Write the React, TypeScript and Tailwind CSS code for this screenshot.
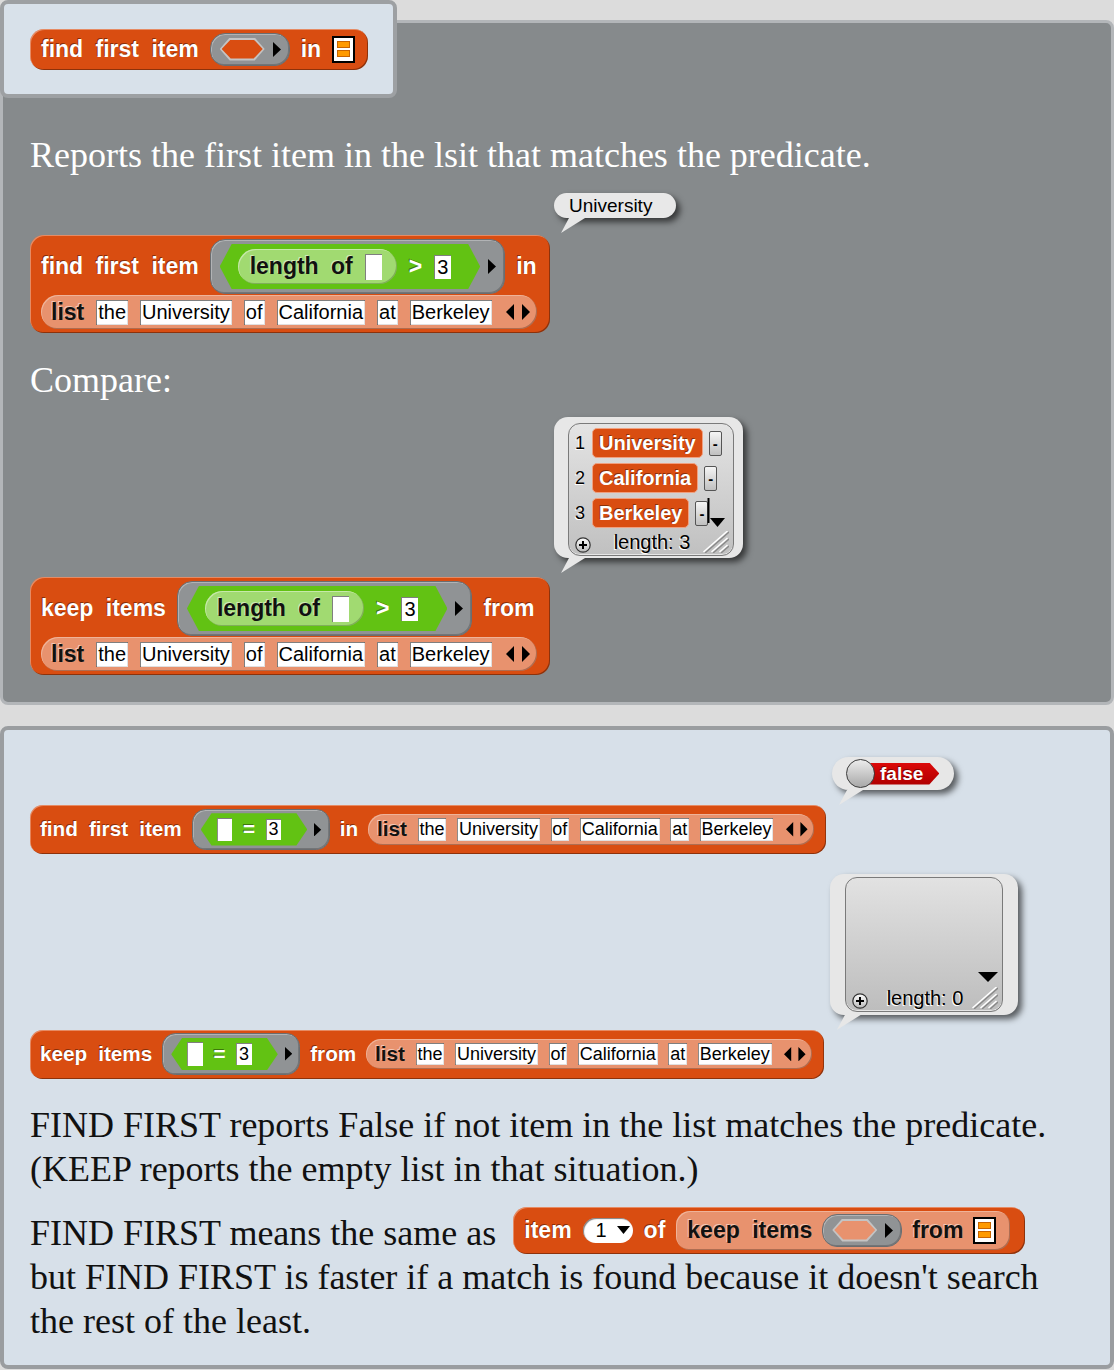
import React from "react";

type C = { children?: React.ReactNode };

const SERIF =
  "font-['Liberation_Serif','Times_New_Roman',serif] text-[36px] leading-[44px]";
const BLOCK =
  "font-['Liberation_Sans',Arial,sans-serif] rounded-[14px] bg-[#d94d11] py-[4px] pl-[11px] shadow-[inset_1px_1px_0_rgba(255,255,255,0.35),inset_-1px_-1px_0_rgba(0,0,0,0.35)]";

function WL({ children }: C) {
  return (
    <span className="shrink-0 whitespace-nowrap text-[23px] font-bold leading-none text-white [word-spacing:6px] [text-shadow:-1px_-1px_0_rgba(0,0,0,0.4)]">
      {children}
    </span>
  );
}

function BL({ children }: C) {
  return (
    <span className="shrink-0 whitespace-nowrap text-[23px] font-bold leading-none text-[#111] [word-spacing:6px] [text-shadow:-1px_-1px_0_rgba(255,255,255,0.5)]">
      {children}
    </span>
  );
}

function RArrow() {
  return (
    <svg width="8" height="15" viewBox="0 0 8 15" className="shrink-0">
      <path d="M0 0L8 7.5L0 15Z" fill="#000" />
    </svg>
  );
}

function LRArrows() {
  return (
    <svg width="24" height="16" viewBox="0 0 24 16" className="ml-[2px] shrink-0">
      <path d="M8 0L0 8L8 16Z M16 0L24 8L16 16Z" fill="#000" />
    </svg>
  );
}

function Slot({ children }: C) {
  return (
    <span className="flex h-[25px] shrink-0 items-center bg-white px-[2px] text-[20px] leading-none text-black shadow-[inset_1px_1px_0_rgba(0,0,0,0.5),inset_-1px_-1px_0_rgba(0,0,0,0.12)]">
      {children}
    </span>
  );
}

function EmptySlot() {
  return (
    <span className="block h-[26px] w-[17px] shrink-0 bg-white shadow-[inset_1px_1px_0_rgba(0,0,0,0.5)]" />
  );
}

function NumSlot({ children }: C) {
  return (
    <span className="flex h-[24px] w-[17px] shrink-0 items-center justify-center bg-white text-[20px] leading-none text-black shadow-[inset_1px_1px_0_rgba(0,0,0,0.5)]">
      {children}
    </span>
  );
}

function Ring({ children }: C) {
  return (
    <span className="flex shrink-0 items-center gap-[8px] rounded-[15px] border border-[#6a6d70] bg-[#909395] py-[4px] pl-[9px] pr-[8px] shadow-[inset_1px_1px_0_rgba(255,255,255,0.3),inset_-1px_-1px_0_rgba(0,0,0,0.2)]">
      {children}
      <RArrow />
    </span>
  );
}

function GreenHex({ children }: C) {
  return (
    <span className="flex items-center gap-[12px] bg-[#62c213] py-[5px] pl-[18px] pr-[29px] [clip-path:polygon(12px_0,calc(100%_-_12px)_0,100%_50%,calc(100%_-_12px)_100%,12px_100%,0_50%)]">
      {children}
    </span>
  );
}

function EmptyHex({ light }: { light?: boolean }) {
  return (
    <span className="block h-[23px] w-[45px] shrink-0 bg-[#c4c4c4] p-[2px] [clip-path:polygon(10px_0,calc(100%_-_10px)_0,100%_50%,calc(100%_-_10px)_100%,10px_100%,0_50%)]">
      <span
        className={
          light
            ? "block h-full w-full bg-[#e8926e] [clip-path:polygon(9px_0,calc(100%_-_9px)_0,100%_50%,calc(100%_-_9px)_100%,9px_100%,0_50%)]"
            : "block h-full w-full bg-[#d94d11] [clip-path:polygon(9px_0,calc(100%_-_9px)_0,100%_50%,calc(100%_-_9px)_100%,9px_100%,0_50%)]"
        }
      />
    </span>
  );
}

function ListIcon() {
  return (
    <span className="flex h-[27px] w-[23px] shrink-0 flex-col items-center justify-center gap-[2px] border-2 border-black bg-white">
      <span className="block h-[7px] w-[13px] border border-[#c86400] bg-[#ff9a00]" />
      <span className="block h-[7px] w-[13px] border border-[#c86400] bg-[#ff9a00]" />
    </span>
  );
}

function ListPill() {
  return (
    <span className="flex h-[34px] shrink-0 items-center gap-[12px] rounded-full bg-[#e8926e] pl-[10px] pr-[7px] shadow-[inset_1px_1px_0_rgba(255,255,255,0.3),inset_-1px_-1px_0_rgba(0,0,0,0.25)]">
      <BL>list</BL>
      {["the", "University", "of", "California", "at", "Berkeley"].map((w) => (
        <Slot key={w}>{w}</Slot>
      ))}
      <LRArrows />
    </span>
  );
}

function LengthPred() {
  return (
    <GreenHex>
      <span className="flex h-[35px] items-center gap-[12px] rounded-full bg-[#a1da71] pl-[12px] pr-[15px] shadow-[inset_1px_1px_0_rgba(255,255,255,0.4),inset_-1px_-1px_0_rgba(0,0,0,0.2)]">
        <BL>length of</BL>
        <EmptySlot />
      </span>
      <WL>&gt;</WL>
      <NumSlot>3</NumSlot>
    </GreenHex>
  );
}

function EqPred() {
  return (
    <GreenHex>
      <EmptySlot />
      <WL>=</WL>
      <NumSlot>3</NumSlot>
    </GreenHex>
  );
}

function Dropdown() {
  return (
    <span className="flex h-[25px] w-[50px] shrink-0 items-center rounded-full bg-white pl-[13px] shadow-[inset_1px_1px_1px_rgba(0,0,0,0.5)]">
      <span className="text-[20px] leading-none text-black">1</span>
      <svg width="13" height="8" viewBox="0 0 13 8" className="ml-[10px]">
        <path d="M0 0H13L6.5 8Z" fill="#000" />
      </svg>
    </span>
  );
}

function Tail() {
  return (
    <span className="absolute left-[7px] top-full block h-[15px] w-[24px] bg-[#e7e7e7] [clip-path:polygon(8px_0,24px_0,0_100%)]" />
  );
}

function PlusBtn() {
  return (
    <svg width="16" height="16" viewBox="0 0 16 16">
      <defs>
        <linearGradient id="pg" x1="0" y1="0" x2="0" y2="1">
          <stop offset="0" stopColor="#ffffff" />
          <stop offset="1" stopColor="#b8b8b8" />
        </linearGradient>
      </defs>
      <circle cx="8" cy="8" r="7.2" fill="url(#pg)" stroke="#333" strokeWidth="1.2" />
      <path d="M4 8H12M8 4V12" stroke="#000" strokeWidth="2" />
    </svg>
  );
}

function Resize() {
  return (
    <svg width="26" height="22" viewBox="0 0 26 22" className="justify-self-end">
      <g stroke="#8a8a8a" strokeWidth="1.5">
        <line x1="2" y1="22" x2="26" y2="1" />
        <line x1="10" y1="22" x2="26" y2="8" />
        <line x1="18" y1="22" x2="26" y2="15" />
      </g>
      <g stroke="#ffffff" strokeWidth="1.5">
        <line x1="0.5" y1="21" x2="24.5" y2="0" />
        <line x1="8.5" y1="21" x2="24.5" y2="7" />
        <line x1="16.5" y1="21" x2="24.5" y2="14" />
      </g>
    </svg>
  );
}

function LengthRow({ n }: { n: number }) {
  return (
    <div className="mt-auto grid grid-cols-[1fr_auto_1fr] items-end pb-[2px] pl-[6px] pr-[4px]">
      <PlusBtn />
      <span className="text-[20px] leading-[22px] text-black [text-shadow:-1px_1px_0_#fff]">
        length: {n}
      </span>
      <Resize />
    </div>
  );
}

function Cell({ i, text }: { i: number; text: string }) {
  return (
    <div className="flex items-center gap-[6px]">
      <span className="w-[11px] text-[18px] leading-none text-black [text-shadow:-1px_1px_0_#fff]">
        {i}
      </span>
      <span className="flex h-[30px] items-center rounded-[5px] border border-[#f0a080] bg-[#d94d11] px-[6px] text-[20px] font-bold leading-none text-white [text-shadow:-1px_-1px_0_rgba(0,0,0,0.4)]">
        {text}
      </span>
      <span className="flex h-[25px] w-[13px] items-center justify-center rounded-[2px] border border-[#555] bg-linear-to-b from-[#f5f5f5] to-[#c0c0c0] text-[15px] font-bold leading-none text-black">
        -
      </span>
    </div>
  );
}

function ListWatcher() {
  return (
    <div className="relative rounded-[14px] bg-[#e7e7e7] pb-[2px] pl-[14px] pr-[9px] pt-[6px] shadow-[4px_4px_6px_rgba(0,0,0,0.6)]">
      <div className="relative flex h-[133px] w-[166px] flex-col rounded-[12px] border border-[#7a7a7a] bg-linear-to-b from-[#e4e4e4] to-[#c0c0c0] shadow-[inset_0_-1px_0_rgba(255,255,255,0.6)]">
        <div className="flex flex-col gap-[5px] pl-[6px] pt-[4px]">
          <Cell i={1} text="University" />
          <Cell i={2} text="California" />
          <Cell i={3} text="Berkeley" />
        </div>
        <LengthRow n={3} />
        <svg
          className="absolute left-[138px] top-[74px]"
          width="19"
          height="30"
          viewBox="0 0 19 30"
        >
          <path d="M1.5 0V25" stroke="#000" strokeWidth="2" />
          <path d="M3 20H18L10.5 29Z" fill="#000" />
        </svg>
      </div>
      <Tail />
    </div>
  );
}

function EmptyWatcher() {
  return (
    <div className="relative rounded-[14px] bg-[#e7e7e7] px-[15px] py-[3px] shadow-[4px_4px_6px_rgba(0,0,0,0.6)]">
      <div className="relative flex h-[135px] w-[158px] flex-col rounded-[12px] border border-[#7a7a7a] bg-linear-to-b from-[#e2e2e2] to-[#bdbdbd] shadow-[inset_0_-1px_0_rgba(255,255,255,0.6)]">
        <LengthRow n={0} />
        <svg
          className="absolute left-[132px] top-[94px]"
          width="20"
          height="10"
          viewBox="0 0 20 10"
        >
          <path d="M0 0H20L10 10Z" fill="#000" />
        </svg>
      </div>
      <Tail />
    </div>
  );
}

function FalseBubble() {
  return (
    <div className="relative flex items-center rounded-full bg-[#e7e7e7] py-[2px] pl-[14px] pr-[15px] shadow-[4px_4px_6px_rgba(0,0,0,0.6)]">
      <span className="relative z-10 block h-[29px] w-[29px] rounded-full border border-[#3a3a3a] bg-linear-to-b from-[#ececec] to-[#a9a9a9]" />
      <span className="-ml-[14px] flex h-[22px] items-center bg-linear-to-b from-[#dc0a0a] to-[#b00000] pl-[19px] pr-[16px] [clip-path:polygon(0_0,calc(100%_-_10px)_0,100%_50%,calc(100%_-_10px)_100%,0_100%)]">
        <span className="text-[19px] font-bold leading-none text-white [text-shadow:-1px_-1px_0_rgba(0,0,0,0.4)]">
          false
        </span>
      </span>
      <Tail />
    </div>
  );
}

function UniBubble() {
  return (
    <div className="relative flex h-[25px] items-center rounded-full bg-[#e8e8e8] pl-[15px] pr-[24px] text-[19px] leading-none text-black shadow-[4px_4px_6px_rgba(0,0,0,0.6)]">
      University
      <Tail />
    </div>
  );
}

export default function App() {
  return (
    <div className="min-h-[1370px] w-full bg-[#dcdcdc] font-['Liberation_Sans',Arial,sans-serif]">
      <div className="relative">
        <div className="absolute left-0 top-0 z-10 flex h-[98px] w-[397px] items-center rounded-[8px] border-4 border-[#9da0a3] bg-[#d8e1ea] pl-[26px]">
          <div className={`flex items-center gap-[11px] pr-[13px] ${BLOCK}`}>
            <WL>find first item</WL>
            <Ring>
              <EmptyHex />
            </Ring>
            <WL>in</WL>
            <ListIcon />
          </div>
        </div>

        <div className="mt-[20px] inline-block w-full rounded-[8px] border-[3px] border-[#b3b6b9] bg-[#868a8c] pb-[27px] pl-[27px] pt-[110px] text-white">
          <div className={SERIF}>
            Reports the first item in the lsit that matches the predicate.
          </div>
          <div className="mt-[16px] flex pl-[524px]">
            <UniBubble />
          </div>
          <div className="mt-[17px] flex">
            <div className={`flex flex-col gap-[1px] pr-[13px] ${BLOCK}`}>
              <div className="flex items-center gap-[11px]">
                <WL>find first item</WL>
                <Ring>
                  <LengthPred />
                </Ring>
                <WL>in</WL>
              </div>
              <div className="flex">
                <ListPill />
              </div>
            </div>
          </div>
          <div className={`mt-[25px] ${SERIF}`}>Compare:</div>
          <div className="mt-[15px] flex pl-[524px]">
            <ListWatcher />
          </div>
          <div className="mt-[19px] flex">
            <div className={`flex flex-col gap-[1px] pr-[13px] ${BLOCK}`}>
              <div className="flex items-center gap-[11px]">
                <WL>keep items</WL>
                <Ring>
                  <LengthPred />
                </Ring>
                <WL>from</WL>
              </div>
              <div className="flex">
                <ListPill />
              </div>
            </div>
          </div>
        </div>
      </div>

      <div className="mt-[21px] rounded-[8px] border-4 border-[#9a9da0] bg-[#d7e0e9] pb-[22px] pl-[26px] pt-[27px] text-[#111]">
        <div className="flex pl-[802px]">
          <FalseBubble />
        </div>
        <div className="mt-[15px] flex">
          <div className={`flex items-center gap-[11px] pr-[13px] [zoom:0.9] ${BLOCK}`}>
            <WL>find first item</WL>
            <Ring>
              <EqPred />
            </Ring>
            <WL>in</WL>
            <ListPill />
          </div>
        </div>
        <div className="mt-[20px] flex pl-[800px]">
          <EmptyWatcher />
        </div>
        <div className="mt-[15px] flex">
          <div className={`flex items-center gap-[11px] pr-[13px] [zoom:0.9] ${BLOCK}`}>
            <WL>keep items</WL>
            <Ring>
              <EqPred />
            </Ring>
            <WL>from</WL>
            <ListPill />
          </div>
        </div>
        <div className={`mt-[24px] ${SERIF}`}>
          FIND FIRST reports False if not item in the list matches the predicate.
          <br />
          (KEEP reports the empty list in that situation.)
        </div>
        <div className={`mt-[16px] ${SERIF}`}>
          FIND FIRST means the same as{" "}
          <span className="ml-[8px] inline-block overflow-hidden align-[-9px]">
            <span className={`flex items-center gap-[11px] pr-[15px] ${BLOCK}`}>
              <WL>item</WL>
              <Dropdown />
              <WL>of</WL>
              <span className="flex items-center gap-[10px] rounded-[14px] bg-[#e8926e] py-[3px] pl-[11px] pr-[14px] shadow-[inset_1px_1px_0_rgba(255,255,255,0.3),inset_-1px_-1px_0_rgba(0,0,0,0.25)]">
                <BL>keep items</BL>
                <Ring>
                  <EmptyHex light />
                </Ring>
                <BL>from</BL>
                <ListIcon />
              </span>
            </span>
          </span>
          <br />
          but FIND FIRST is faster if a match is found because it doesn't search
          <br />
          the rest of the least.
        </div>
      </div>
    </div>
  );
}
